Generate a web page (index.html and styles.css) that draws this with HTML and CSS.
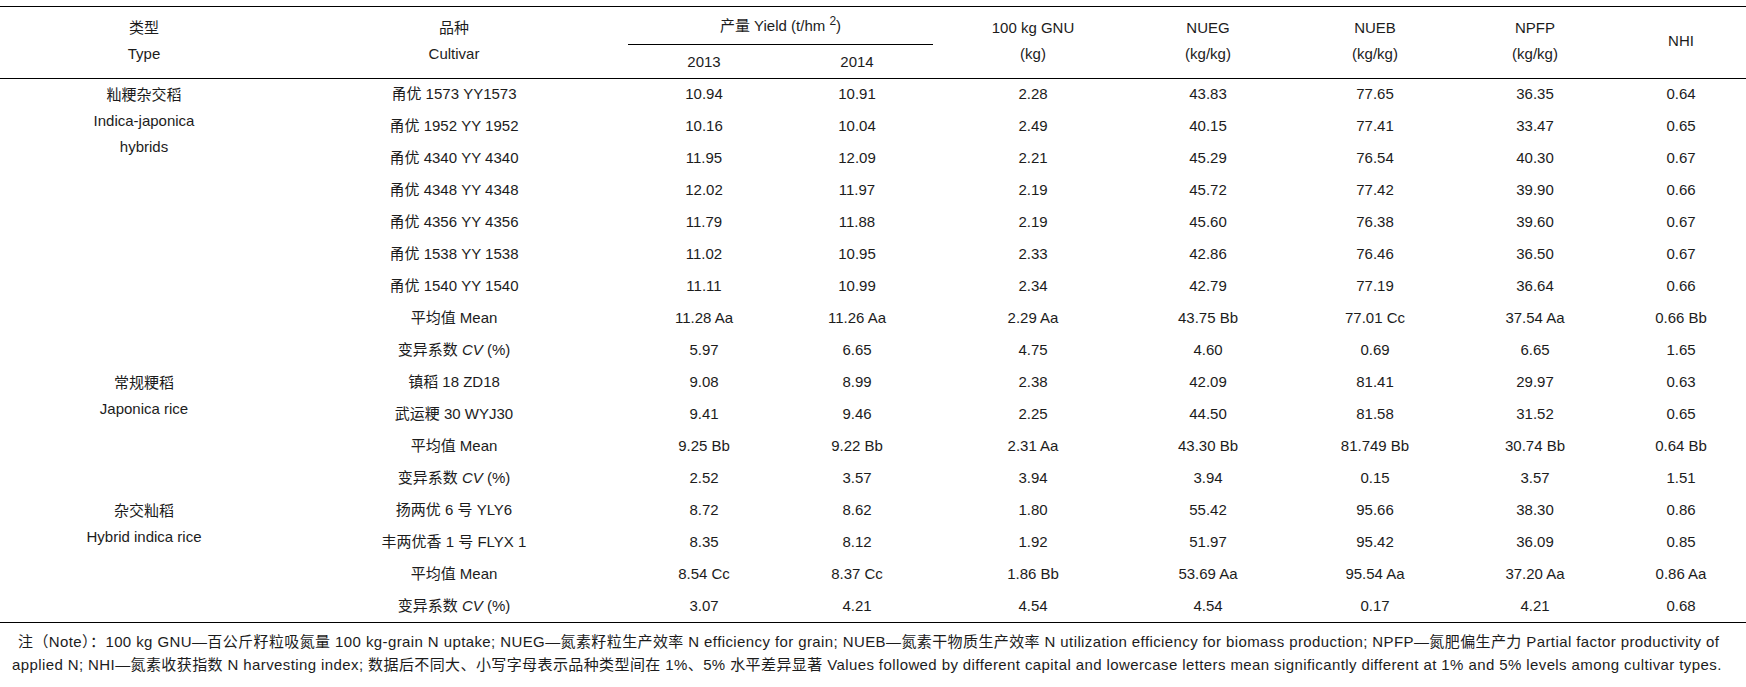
FILE: index.html
```html
<!DOCTYPE html>
<html lang="zh-CN">
<head>
<meta charset="utf-8">
<title>Table</title>
<link rel="stylesheet" href="styles.css">
</head>
<body>
<div class="page">
<table class="data">
  <colgroup>
    <col class="w1"><col class="w2"><col class="w3"><col class="w4"><col class="w5"><col class="w6"><col class="w7"><col class="w8"><col class="w9">
  </colgroup>
  <thead>
    <tr class="ha">
      <th rowspan="2" class="two">类型<br>Type</th>
      <th rowspan="2" class="two">品种<br>Cultivar</th>
      <th colspan="2" class="yield"><div class="yield-label">产量 Yield (t/hm <sup>2</sup>)</div></th>
      <th rowspan="2" class="two">100 kg GNU<br>(kg)</th>
      <th rowspan="2" class="two">NUEG<br>(kg/kg)</th>
      <th rowspan="2" class="two">NUEB<br>(kg/kg)</th>
      <th rowspan="2" class="two">NPFP<br>(kg/kg)</th>
      <th rowspan="2" class="two nhi">NHI</th>
    </tr>
    <tr class="hb">
      <th>2013</th>
      <th class="y2014">2014</th>
    </tr>
  </thead>
  <tbody>
    <tr><td rowspan="9" class="type">籼粳杂交稻<br>Indica-japonica<br>hybrids</td><td>甬优 1573 YY1573</td><td>10.94</td><td>10.91</td><td>2.28</td><td>43.83</td><td>77.65</td><td>36.35</td><td>0.64</td></tr>
    <tr><td>甬优 1952 YY 1952</td><td>10.16</td><td>10.04</td><td>2.49</td><td>40.15</td><td>77.41</td><td>33.47</td><td>0.65</td></tr>
    <tr><td>甬优 4340 YY 4340</td><td>11.95</td><td>12.09</td><td>2.21</td><td>45.29</td><td>76.54</td><td>40.30</td><td>0.67</td></tr>
    <tr><td>甬优 4348 YY 4348</td><td>12.02</td><td>11.97</td><td>2.19</td><td>45.72</td><td>77.42</td><td>39.90</td><td>0.66</td></tr>
    <tr><td>甬优 4356 YY 4356</td><td>11.79</td><td>11.88</td><td>2.19</td><td>45.60</td><td>76.38</td><td>39.60</td><td>0.67</td></tr>
    <tr><td>甬优 1538 YY 1538</td><td>11.02</td><td>10.95</td><td>2.33</td><td>42.86</td><td>76.46</td><td>36.50</td><td>0.67</td></tr>
    <tr><td>甬优 1540 YY 1540</td><td>11.11</td><td>10.99</td><td>2.34</td><td>42.79</td><td>77.19</td><td>36.64</td><td>0.66</td></tr>
    <tr><td>平均值 Mean</td><td>11.28 Aa</td><td>11.26 Aa</td><td>2.29 Aa</td><td>43.75 Bb</td><td>77.01 Cc</td><td>37.54 Aa</td><td>0.66 Bb</td></tr>
    <tr><td>变异系数 <i>CV</i> (%)</td><td>5.97</td><td>6.65</td><td>4.75</td><td>4.60</td><td>0.69</td><td>6.65</td><td>1.65</td></tr>
    <tr><td rowspan="4" class="type">常规粳稻<br>Japonica rice</td><td>镇稻 18 ZD18</td><td>9.08</td><td>8.99</td><td>2.38</td><td>42.09</td><td>81.41</td><td>29.97</td><td>0.63</td></tr>
    <tr><td>武运粳 30 WYJ30</td><td>9.41</td><td>9.46</td><td>2.25</td><td>44.50</td><td>81.58</td><td>31.52</td><td>0.65</td></tr>
    <tr><td>平均值 Mean</td><td>9.25 Bb</td><td>9.22 Bb</td><td>2.31 Aa</td><td>43.30 Bb</td><td>81.749 Bb</td><td>30.74 Bb</td><td>0.64 Bb</td></tr>
    <tr><td>变异系数 <i>CV</i> (%)</td><td>2.52</td><td>3.57</td><td>3.94</td><td>3.94</td><td>0.15</td><td>3.57</td><td>1.51</td></tr>
    <tr><td rowspan="4" class="type">杂交籼稻<br>Hybrid indica rice</td><td>扬两优 6 号 YLY6</td><td>8.72</td><td>8.62</td><td>1.80</td><td>55.42</td><td>95.66</td><td>38.30</td><td>0.86</td></tr>
    <tr><td>丰两优香 1 号 FLYX 1</td><td>8.35</td><td>8.12</td><td>1.92</td><td>51.97</td><td>95.42</td><td>36.09</td><td>0.85</td></tr>
    <tr><td>平均值 Mean</td><td>8.54 Cc</td><td>8.37 Cc</td><td>1.86 Bb</td><td>53.69 Aa</td><td>95.54 Aa</td><td>37.20 Aa</td><td>0.86 Aa</td></tr>
    <tr><td>变异系数 <i>CV</i> (%)</td><td>3.07</td><td>4.21</td><td>4.54</td><td>4.54</td><td>0.17</td><td>4.21</td><td>0.68</td></tr>
  </tbody>
</table>
<div class="note">
  <div class="note-line first">注（Note）：100 kg GNU—百公斤籽粒吸氮量 100 kg-grain N uptake; NUEG—氮素籽粒生产效率 N efficiency for grain; NUEB—氮素干物质生产效率 N utilization efficiency for biomass production; NPFP—氮肥偏生产力 Partial factor productivity of</div>
  <div class="note-line">applied N; NHI—氮素收获指数 N harvesting index; 数据后不同大、小写字母表示品种类型间在 1%、5% 水平差异显著 Values followed by different capital and lowercase letters mean significantly different at 1% and 5% levels among cultivar types.</div>
</div>
</div>
</body>
</html>
```
FILE: styles.css
```css
html, body {
  margin: 0;
  padding: 0;
  background: #ffffff;
}
body {
  font-family: "Liberation Sans", "Noto Sans CJK SC", sans-serif;
  font-size: 15px;
  color: #1c1c1c;
}
.page {
  width: 1746px;
  padding-top: 6px;
}
.data {
  width: 1746px;
  table-layout: fixed;
  border-collapse: collapse;
  border-top: 1px solid #000;
  border-bottom: 1px solid #000;
}
.w1 { width: 288px; }
.w2 { width: 332px; }
.w3 { width: 168px; }
.w4 { width: 152px; }
.w5 { width: 186px; }
.w6 { width: 164px; }
.w7 { width: 170px; }
.w8 { width: 150px; }
.w9 { width: 136px; }

th, td {
  padding: 0;
  font-weight: normal;
  text-align: center;
  white-space: nowrap;
}
thead {
  border-bottom: 1px solid #000;
}
.ha th {
  height: 38px;
}
.two {
  line-height: 26px;
  vertical-align: middle;
  padding-bottom: 3px;
}
.nhi {
  padding-left: 6px;
}
.yield {
  vertical-align: top;
  padding-top: 3px;
}
.yield-label {
  margin: 0 7px 0 8px;
  height: 34px;
  line-height: 32px;
  border-bottom: 1px solid #000;
}
.yield-label sup {
  font-size: 12px;
  line-height: 0;
  vertical-align: 6px;
}
.hb th {
  height: 27px;
  padding-bottom: 3px;
  vertical-align: middle;
}
.hb .y2014 {
  padding-right: 14px;
}
tbody td {
  height: 32px;
  box-sizing: border-box;
  padding: 0 0 1px;
  vertical-align: middle;
  line-height: 20px;
}
tbody td:nth-last-child(6) {
  padding-right: 14px;
}
tbody td:last-child {
  padding-left: 6px;
}
tbody td.type {
  vertical-align: top;
  padding: 3px 0 0;
  line-height: 26px;
}
.note {
  padding: 7px 0 0 12px;
  line-height: 23px;
  font-size: 15px;
  letter-spacing: 0.4px;
}
.note-line {
  white-space: nowrap;
}
.note-line.first {
  text-indent: 6px;
}
```
